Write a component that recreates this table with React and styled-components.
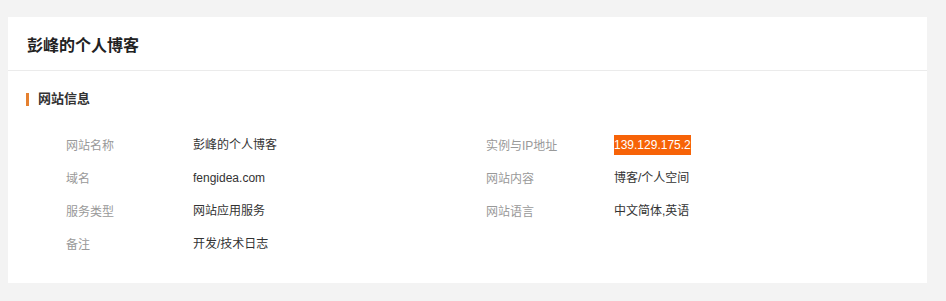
import React from "react";
import styled, { createGlobalStyle } from "styled-components";

const GlobalStyle = createGlobalStyle`
  html, body {
    margin: 0;
    padding: 0;
    background: #f3f3f3;
    font-family: "Liberation Sans", Arial, "Noto Sans CJK SC", sans-serif;
  }
`;

const info = [
  { label: "网站名称", value: "彭峰的个人博客" },
  { label: "实例与IP地址", value: "139.129.175.2", highlight: true },
  { label: "域名", value: "fengidea.com" },
  { label: "网站内容", value: "博客/个人空间" },
  { label: "服务类型", value: "网站应用服务" },
  { label: "网站语言", value: "中文简体,英语" },
  { label: "备注", value: "开发/技术日志" },
];

function App() {
  return (
    <Page>
      <GlobalStyle />
      <Card>
        <CardHeader>
          <Title>彭峰的个人博客</Title>
        </CardHeader>
        <CardBody>
          <SectionTitle>网站信息</SectionTitle>
          <InfoGrid>
            {info.map((item) => (
              <React.Fragment key={item.label}>
                <Label>{item.label}</Label>
                <Value>
                  <ValueText $highlight={item.highlight}>{item.value}</ValueText>
                </Value>
              </React.Fragment>
            ))}
          </InfoGrid>
        </CardBody>
      </Card>
    </Page>
  );
}

const Page = styled.div`
  padding: 17px 19px 18px 8px;
  box-sizing: border-box;
  min-height: 301px;
`;

const Card = styled.div`
  background: #fff;
  height: 266px;
`;

const CardHeader = styled.div`
  height: 53px;
  display: flex;
  align-items: center;
  padding: 0 19px;
  border-bottom: 1px solid #ebebeb;
`;

const Title = styled.h1`
  margin: 0;
  font-size: 16px;
  font-weight: bold;
  color: #222;
`;

const CardBody = styled.div`
  padding: 21px 19px 0 18px;
`;

const SectionTitle = styled.h2`
  margin: 0;
  display: flex;
  align-items: center;
  font-size: 13px;
  line-height: 14px;
  font-weight: bold;
  color: #333;

  &::before {
    content: "";
    width: 3px;
    height: 13px;
    margin-right: 9px;
    background: #e5802f;
  }
`;

const InfoGrid = styled.div`
  display: grid;
  grid-template-columns: 127px 293px 128px 1fr;
  grid-auto-rows: 33px;
  margin-top: 22px;
  padding-left: 40px;
  font-size: 12px;
`;

const Label = styled.div`
  display: flex;
  align-items: center;
  color: #999;
`;

const Value = styled.div`
  display: flex;
  align-items: center;
  color: #333;
`;

const ValueText = styled.span`
  line-height: 20px;
  background: ${(p) => (p.$highlight ? "#f76307" : "transparent")};
  color: ${(p) => (p.$highlight ? "#fff" : "inherit")};
`;

export default App;
